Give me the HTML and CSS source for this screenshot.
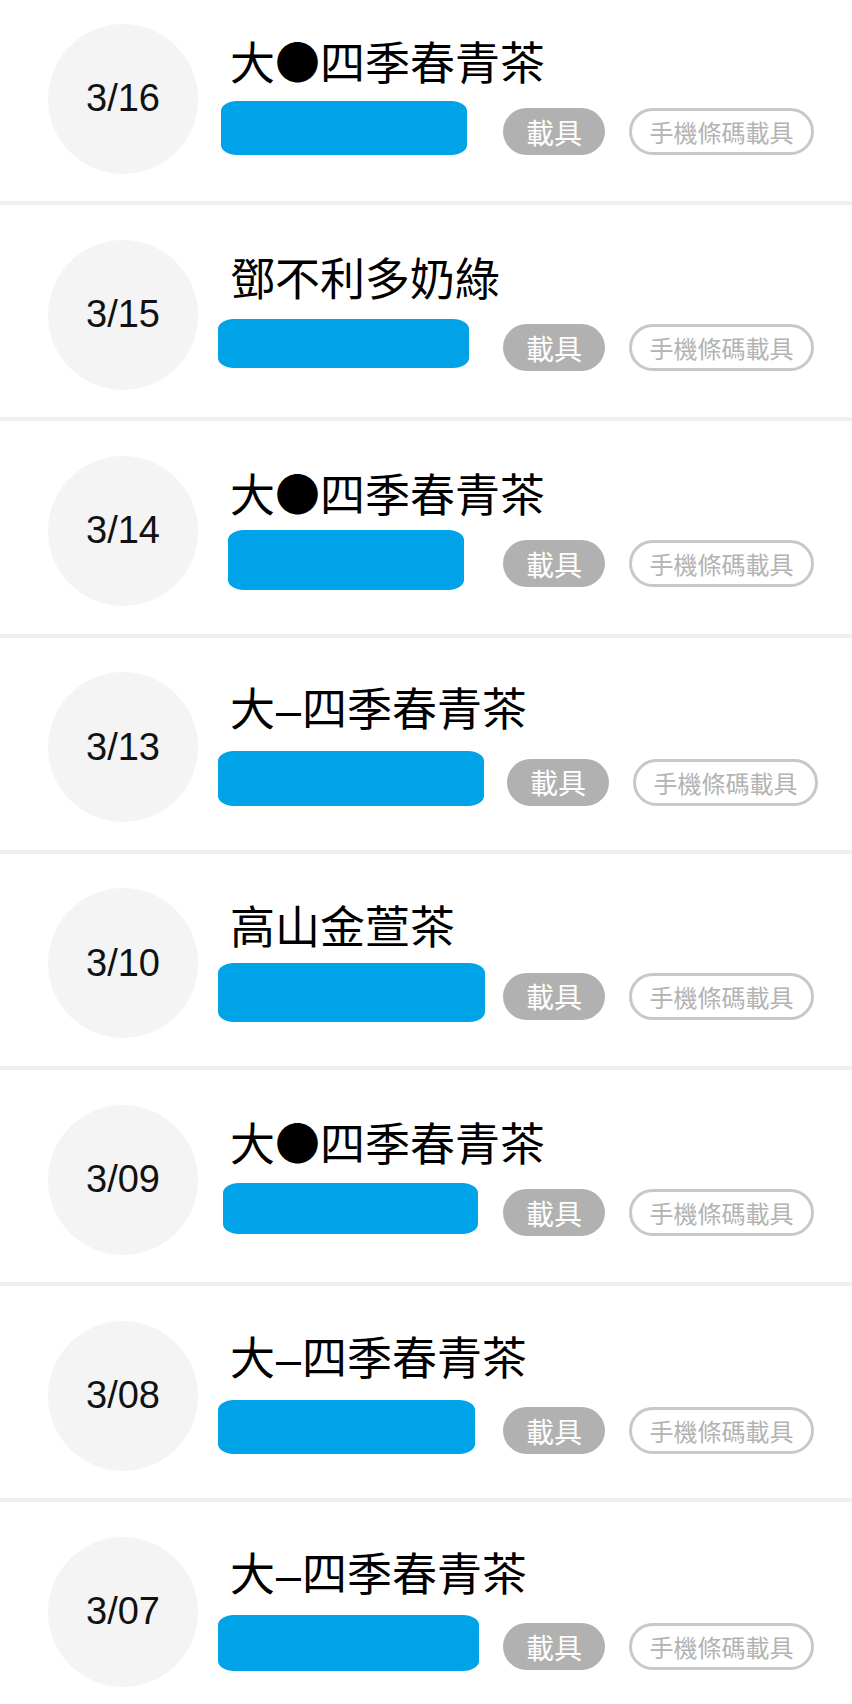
FILE: index.html
```html
<!DOCTYPE html>
<html lang="zh-Hant">
<head>
    <meta charset="UTF-8">
    <meta name="viewport" content="width=device-width, initial-scale=1.0">
    <title>消費紀錄</title>
    <link rel="stylesheet" href="styles.css">
</head>
<body>
    <ul class="list">
        <li class="item">
            <div class="date">3/16</div>
            <div class="info">
                <div class="name">大●四季春青茶</div>
                <div class="meta">
                    <div class="amount"><span class="redact" style="margin-left:-9px;width:246px;height:54px"></span></div>
                    <span class="tag tag-fill">載具</span>
                    <span class="tag tag-line">手機條碼載具</span>
                </div>
            </div>
        </li>
        <li class="item">
            <div class="date">3/15</div>
            <div class="info">
                <div class="name">鄧不利多奶綠</div>
                <div class="meta">
                    <div class="amount"><span class="redact" style="margin-left:-12px;width:251px;height:49px"></span></div>
                    <span class="tag tag-fill">載具</span>
                    <span class="tag tag-line">手機條碼載具</span>
                </div>
            </div>
        </li>
        <li class="item">
            <div class="date">3/14</div>
            <div class="info">
                <div class="name">大●四季春青茶</div>
                <div class="meta">
                    <div class="amount"><span class="redact" style="margin-left:-2px;width:236px;height:60px"></span></div>
                    <span class="tag tag-fill">載具</span>
                    <span class="tag tag-line">手機條碼載具</span>
                </div>
            </div>
        </li>
        <li class="item">
            <div class="date">3/13</div>
            <div class="info">
                <div class="name">大<span class="dash">–</span>四季春青茶</div>
                <div class="meta">
                    <div class="amount wide"><span class="redact" style="margin-left:-12px;width:266px;height:55px"></span></div>
                    <span class="tag tag-fill">載具</span>
                    <span class="tag tag-line">手機條碼載具</span>
                </div>
            </div>
        </li>
        <li class="item">
            <div class="date">3/10</div>
            <div class="info">
                <div class="name">高山金萱茶</div>
                <div class="meta">
                    <div class="amount"><span class="redact" style="margin-left:-12px;width:267px;height:59px"></span></div>
                    <span class="tag tag-fill">載具</span>
                    <span class="tag tag-line">手機條碼載具</span>
                </div>
            </div>
        </li>
        <li class="item">
            <div class="date">3/09</div>
            <div class="info">
                <div class="name">大●四季春青茶</div>
                <div class="meta">
                    <div class="amount"><span class="redact" style="margin-left:-7px;width:255px;height:51px"></span></div>
                    <span class="tag tag-fill">載具</span>
                    <span class="tag tag-line">手機條碼載具</span>
                </div>
            </div>
        </li>
        <li class="item">
            <div class="date">3/08</div>
            <div class="info">
                <div class="name">大<span class="dash">–</span>四季春青茶</div>
                <div class="meta">
                    <div class="amount"><span class="redact" style="margin-left:-12px;width:257px;height:54px"></span></div>
                    <span class="tag tag-fill">載具</span>
                    <span class="tag tag-line">手機條碼載具</span>
                </div>
            </div>
        </li>
        <li class="item">
            <div class="date">3/07</div>
            <div class="info">
                <div class="name">大<span class="dash">–</span>四季春青茶</div>
                <div class="meta">
                    <div class="amount"><span class="redact" style="margin-left:-12px;width:261px;height:56px"></span></div>
                    <span class="tag tag-fill">載具</span>
                    <span class="tag tag-line">手機條碼載具</span>
                </div>
            </div>
        </li>
    </ul>
</body>
</html>
```

FILE: styles.css
```css
html, body {
    margin: 0;
    padding: 0;
    background: #ffffff;
    overflow: hidden;
}

body {
    font-family: "Noto Sans CJK TC", "Noto Sans", sans-serif;
    color: #000000;
}

/* List */
.list {
    list-style: none;
    margin: -11px 0 0 0;
    padding: 0;
}

.item {
    box-sizing: border-box;
    height: 216.2px;
    padding: 7px 0 0 48px;
    display: flex;
    align-items: center;
    gap: 32px;
    border-bottom: 4px solid #f0f0f0;
}

.date {
    flex: none;
    width: 150px;
    height: 150px;
    border-radius: 50%;
    background: #f4f4f4;
    display: flex;
    align-items: center;
    justify-content: center;
    font-family: "Liberation Sans", Arial, sans-serif;
    font-size: 38px;
    color: #111111;
}

.info {
    display: flex;
    flex-direction: column;
    gap: 14px;
    padding-bottom: 8px;
}

.name {
    font-size: 45px;
    line-height: 52px;
    white-space: nowrap;
}

.dash {
    font-family: "Liberation Sans", Arial, sans-serif;
    padding: 0 1px;
}

/* Amount + tags */
.meta {
    display: flex;
    align-items: center;
    height: 54px;
}

.amount {
    flex: none;
    width: 273px;
    display: flex;
    align-items: center;
}

.amount.wide {
    width: 277px;
}

.redact {
    display: block;
    flex: none;
    background: #00a3e8;
    border-radius: 16px / 10px;
}

.tag {
    box-sizing: border-box;
    height: 47px;
    margin-top: 8px;
    border-radius: 24px;
    display: inline-flex;
    align-items: center;
    justify-content: center;
    white-space: nowrap;
}

.tag-fill {
    width: 102px;
    background: #b1b1b1;
    color: #ffffff;
    font-size: 28px;
}

.tag-line {
    width: 185px;
    margin-left: 24px;
    border: 3px solid #c8c8c8;
    color: #b3b3b3;
    font-size: 24px;
}
```
